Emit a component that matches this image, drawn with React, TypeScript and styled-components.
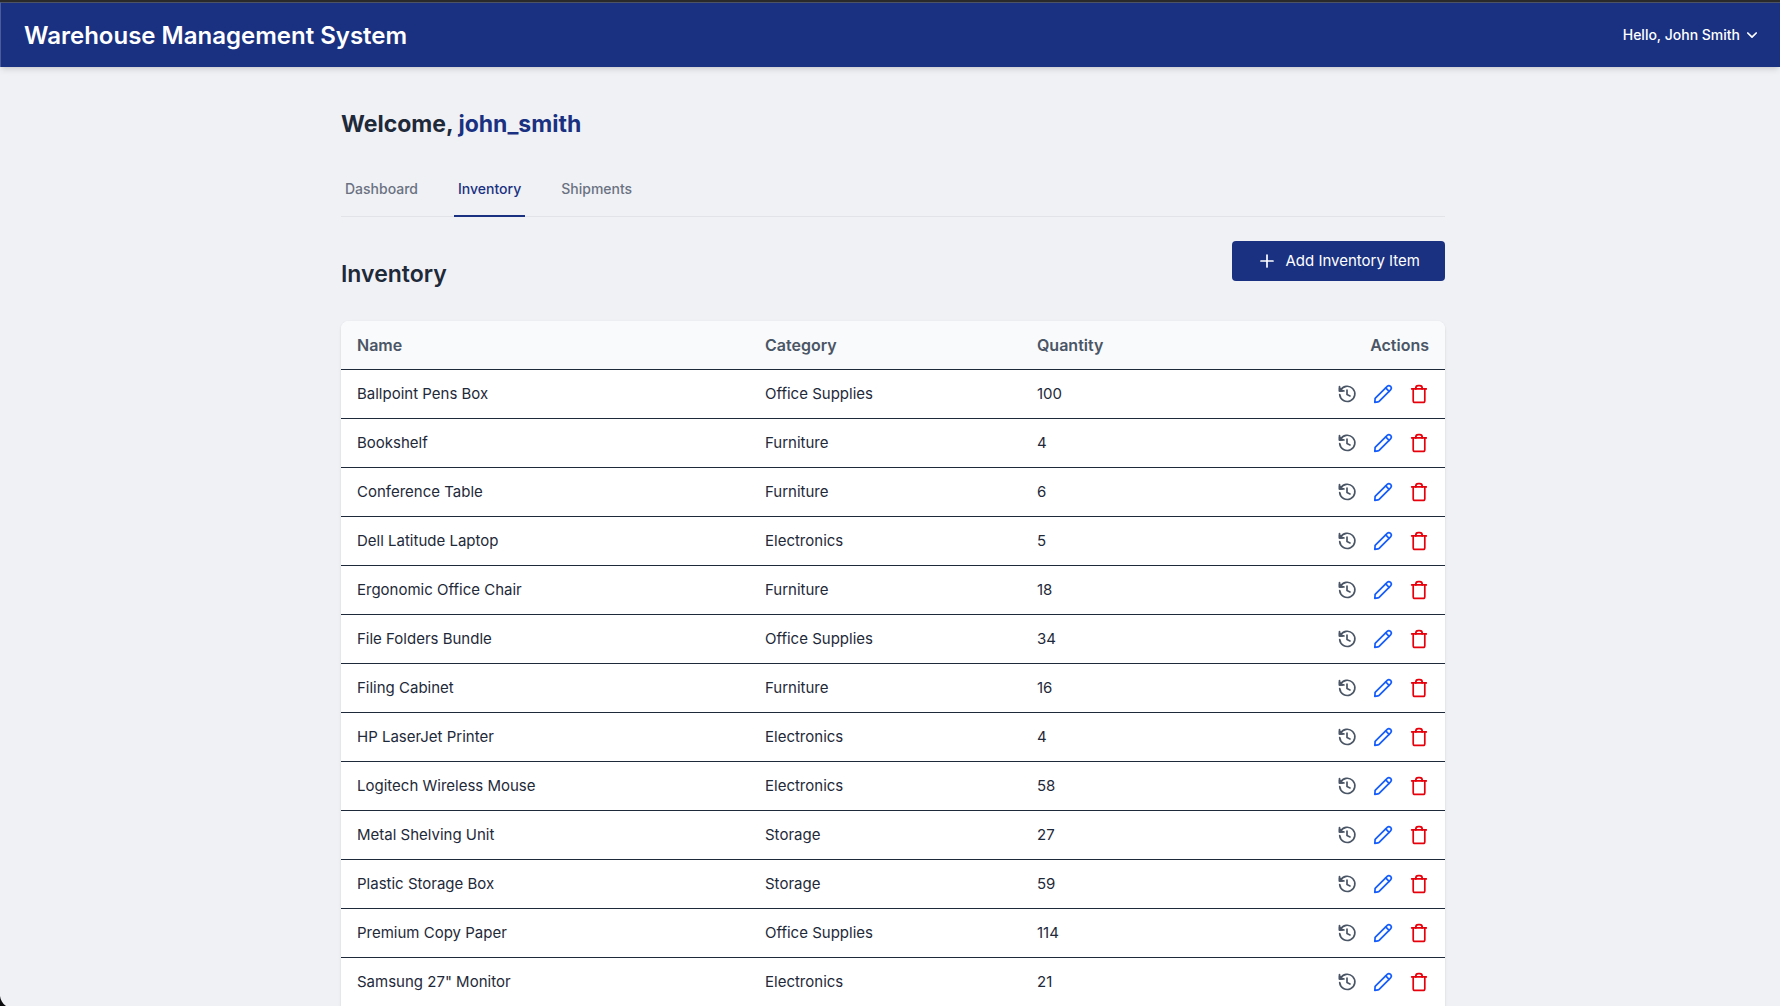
import React from "react";
import styled, { createGlobalStyle } from "styled-components";

const navy = "#1a3182";
const ink = "#1e2939";
const slate = "#4a5565";

const GlobalStyle = createGlobalStyle`
  *, *::before, *::after { box-sizing: border-box; }
  html { background: #f0f1f5; overflow: hidden; }
  body {
    margin: 0;
    background: #f0f1f5;
    color: ${ink};
    font-family: Inter, "Liberation Sans", sans-serif;
    font-size: 15px;
    line-height: 24px;
  }
  h1, h2, p { margin: 0; }
  button { font: inherit; border: 0; cursor: pointer; }
`;

const Frame = styled.div`
  position: relative;
  height: 100vh;
  overflow: hidden;
  border-top: 2px solid #2a2a2b;
  background: #f0f1f5;
`;

const WindowCorner = styled.svg`
  position: absolute;
  left: 0;
  bottom: 0;
  width: 6px;
  height: 10px;
`;

const TopBar = styled.header`
  display: flex;
  align-items: center;
  justify-content: space-between;
  height: 65px;
  padding: 0 20px 0 23px;
  border-top: 1px solid #4d5363;
  border-left: 1px solid #4a5c9b;
  background: ${navy};
  box-shadow: 0 4px 6px -1px rgba(0, 0, 0, 0.1), 0 2px 4px -2px rgba(0, 0, 0, 0.1);
`;

const Brand = styled.p`
  padding-top: 2px;
  color: #ffffff;
  font-size: 24px;
  font-weight: 600;
  line-height: 32px;
`;

const UserMenu = styled.button`
  display: flex;
  align-items: center;
  gap: 4px;
  padding: 0;
  background: none;
  color: #ffffff;
  font-size: 14px;
  font-weight: 500;
  line-height: 20px;
`;

const Main = styled.main`
  padding: 40px 24px 40px 30px;
`;

const Content = styled.div`
  max-width: 1104px;
  margin: 0 auto;
`;

const Welcome = styled.h1`
  margin-bottom: 22px;
  font-size: 23px;
  font-weight: 700;
  line-height: 34px;
`;

const UserName = styled.span`
  color: ${navy};
`;

const Tabs = styled.nav`
  display: flex;
  gap: 32px;
  border-bottom: 1px solid #e1e3e8;
`;

const Tab = styled.a<{ $active?: boolean }>`
  margin-bottom: -1px;
  padding: 16px 4px;
  border-bottom: 2px solid ${(p) => (p.$active ? navy : "transparent")};
  color: ${(p) => (p.$active ? navy : "#6a7282")};
  font-size: 14px;
  font-weight: 500;
  line-height: 20px;
  text-decoration: none;
`;

const Toolbar = styled.div`
  display: flex;
  align-items: flex-start;
  justify-content: space-between;
  margin: 24px 0 16px;
`;

const SectionTitle = styled.h2`
  margin: 16px 0 14px;
  font-size: 23px;
  font-weight: 600;
  line-height: 34px;
`;

const AddButton = styled.button`
  display: flex;
  align-items: center;
  gap: 8px;
  padding: 8px 25px;
  border-radius: 4px;
  background: ${navy};
  color: #ffffff;
`;

const Card = styled.div`
  overflow: hidden;
  border-radius: 8px 8px 0 0;
  background: #ffffff;
  box-shadow: 0 1px 3px rgba(0, 0, 0, 0.1), 0 1px 2px -1px rgba(0, 0, 0, 0.1);
`;

const Table = styled.table`
  width: 100%;
  table-layout: fixed;
  border-spacing: 0;
`;

const Col = styled.col<{ $width?: number }>`
  width: ${(p) => (p.$width ? `${p.$width}px` : "auto")};
`;

const HeadCell = styled.th<{ $end?: boolean }>`
  padding: 12px 16px;
  border-bottom: 1px solid ${ink};
  background: #f8fafc;
  color: ${slate};
  font-size: 16px;
  font-weight: 600;
  text-align: ${(p) => (p.$end ? "right" : "left")};
`;

const Cell = styled.td`
  padding: 12px 16px;
  border-bottom: 1px solid ${ink};
`;

const Actions = styled.div`
  display: flex;
  justify-content: flex-end;
  gap: 16px;
`;

const IconButton = styled.button<{ $color: string }>`
  display: flex;
  align-items: center;
  width: 20px;
  height: 24px;
  padding: 0;
  background: none;
  color: ${(p) => p.$color};
`;

const Glyph = styled.svg<{ $size: number }>`
  flex: none;
  width: ${(p) => p.$size}px;
  height: ${(p) => p.$size}px;
  fill: none;
  stroke: currentColor;
  stroke-width: 1.7;
  stroke-linecap: round;
  stroke-linejoin: round;
`;

const ChevronIcon = () => (
  <Glyph $size={16} viewBox="0 0 16 16" aria-hidden="true">
    <path d="M3.8 6L8 10.2L12.2 6" />
  </Glyph>
);

const PlusIcon = () => (
  <Glyph $size={20} viewBox="0 0 20 20" aria-hidden="true">
    <path d="M10 4V16M4 10H16" />
  </Glyph>
);

const HistoryIcon = () => (
  <Glyph $size={20} viewBox="0 0 20 20" aria-hidden="true">
    <path d="M3.4 6.6A7.6 7.6 0 1 1 2.7 10.6" />
    <path d="M2.5 2.6V6.9H6.9" />
    <path d="M2.6 4.2L5.3 6.9H2.6Z" fill="currentColor" />
    <path d="M10 6.2V10.5L13 11.9" />
  </Glyph>
);

const PencilIcon = () => (
  <Glyph $size={20} viewBox="0 0 20 20" aria-hidden="true">
    <path d="M1.8 18.3L2.1 14.9C2.1 14.5 2.3 14.2 2.6 13.9L14.2 2.4C15.1 1.5 16.6 1.5 17.6 2.4C18.5 3.4 18.5 4.8 17.6 5.8L6.1 17.4C5.8 17.7 5.5 17.9 5.1 17.9Z" />
    <path d="M12.7 3.9L16.1 7.3" />
  </Glyph>
);

const TrashIcon = () => (
  <Glyph $size={20} viewBox="0 0 20 20" aria-hidden="true">
    <path d="M2.7 4.9H17.3" />
    <path d="M4.2 4.9V16.7C4.2 17.7 4.9 18.4 5.9 18.4H14.1C15.1 18.4 15.8 17.7 15.8 16.7V4.9" />
    <path d="M6.8 4.9V4.3C6.8 2.7 7.7 1.7 9.2 1.7H10.8C12.3 1.7 13.2 2.7 13.2 4.3V4.9" />
  </Glyph>
);

const items: [string, string, number][] = [
  ["Ballpoint Pens Box", "Office Supplies", 100],
  ["Bookshelf", "Furniture", 4],
  ["Conference Table", "Furniture", 6],
  ["Dell Latitude Laptop", "Electronics", 5],
  ["Ergonomic Office Chair", "Furniture", 18],
  ["File Folders Bundle", "Office Supplies", 34],
  ["Filing Cabinet", "Furniture", 16],
  ["HP LaserJet Printer", "Electronics", 4],
  ["Logitech Wireless Mouse", "Electronics", 58],
  ["Metal Shelving Unit", "Storage", 27],
  ["Plastic Storage Box", "Storage", 59],
  ["Premium Copy Paper", "Office Supplies", 114],
  ['Samsung 27" Monitor', "Electronics", 21],
];

export default function App() {
  return (
    <Frame>
      <GlobalStyle />
      <TopBar>
        <Brand>Warehouse Management System</Brand>
        <UserMenu type="button">
          Hello, John Smith
          <ChevronIcon />
        </UserMenu>
      </TopBar>
      <Main>
        <Content>
          <Welcome>
            Welcome, <UserName>john_smith</UserName>
          </Welcome>
          <Tabs>
            <Tab href="#dashboard">Dashboard</Tab>
            <Tab href="#inventory" $active aria-current="page">
              Inventory
            </Tab>
            <Tab href="#shipments">Shipments</Tab>
          </Tabs>
          <Toolbar>
            <SectionTitle>Inventory</SectionTitle>
            <AddButton type="button">
              <PlusIcon />
              Add Inventory Item
            </AddButton>
          </Toolbar>
          <Card>
            <Table>
              <colgroup>
                <Col $width={408} />
                <Col $width={272} />
                <Col />
                <Col $width={160} />
              </colgroup>
              <thead>
                <tr>
                  <HeadCell scope="col">Name</HeadCell>
                  <HeadCell scope="col">Category</HeadCell>
                  <HeadCell scope="col">Quantity</HeadCell>
                  <HeadCell scope="col" $end>
                    Actions
                  </HeadCell>
                </tr>
              </thead>
              <tbody>
                {items.map(([name, category, quantity]) => (
                  <tr key={name}>
                    <Cell>{name}</Cell>
                    <Cell>{category}</Cell>
                    <Cell>{quantity}</Cell>
                    <Cell>
                      <Actions>
                        <IconButton type="button" $color={slate} aria-label={`History of ${name}`}>
                          <HistoryIcon />
                        </IconButton>
                        <IconButton type="button" $color="#155dfc" aria-label={`Edit ${name}`}>
                          <PencilIcon />
                        </IconButton>
                        <IconButton type="button" $color="#e7000b" aria-label={`Delete ${name}`}>
                          <TrashIcon />
                        </IconButton>
                      </Actions>
                    </Cell>
                  </tr>
                ))}
              </tbody>
            </Table>
          </Card>
        </Content>
      </Main>
      <WindowCorner viewBox="0 0 6 10" aria-hidden="true">
        <path d="M0 0C0.6 4 2.4 7.6 6 10H0Z" fill="#0c0c0e" />
      </WindowCorner>
    </Frame>
  );
}
